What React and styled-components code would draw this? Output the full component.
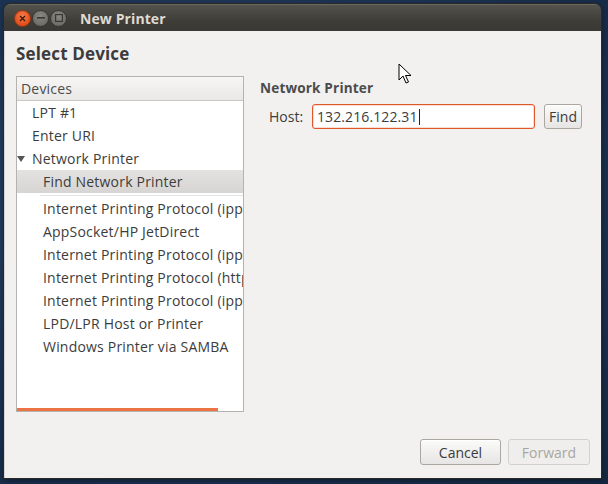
import React from "react";
import styled, { createGlobalStyle } from "styled-components";

const Global = createGlobalStyle`
  html, body { margin: 0; padding: 0; }
  body {
    width: 608px; height: 484px; overflow: hidden;
    background: radial-gradient(ellipse at 30% 40%, #2c4a72 0%, #1d3556 50%, #142843 100%);
    font-family: "Open Sans", "DejaVu Sans", sans-serif;
  }
`;

const Window = styled.div`
  position: relative;
  margin: 4px 7px 0 4px;
  width: 597px;
  height: 474px;
  display: flex;
  flex-direction: column;
  border-radius: 6px 6px 0 0;
  box-shadow: 0 0 0 1px #2a2925, 0 2px 6px rgba(0,0,0,0.5);
  overflow: hidden;
`;

const TitleBar = styled.div`
  height: 27px;
  flex: none;
  display: flex;
  align-items: center;
  padding-left: 10px;
  background: linear-gradient(#54524c, #3f3d38 60%, #3a3834);
  border-top: 1px solid #6a6760;
  box-sizing: border-box;
`;

const WinBtn = styled.div`
  width: 17px;
  height: 17px;
  border-radius: 50%;
  margin-right: 1px;
  display: flex;
  align-items: center;
  justify-content: center;
  box-sizing: border-box;
  background: ${p => p.$close
    ? "radial-gradient(circle at 50% 35%, #f77c4c, #e0501c 70%, #c8400f)"
    : "radial-gradient(circle at 50% 35%, #8a8883, #6f6d68 70%, #5e5c57)"};
  border: 1px solid ${p => p.$close ? "#9c3410" : "#3a3834"};
`;

const Title = styled.div`
  margin-left: 12px;
  color: #dfdbd2;
  font-weight: 700;
  font-size: 14px;
  letter-spacing: 0.1px;
`;

const Body = styled.div`
  flex: 1;
  background: #f2f1f0;
  display: flex;
  flex-direction: column;
  padding: 12px 11px 13px 11px;
  box-sizing: border-box;
  border-left: 1px solid #d6d4d0;
`;

const Heading = styled.div`
  font-size: 17px;
  font-weight: 700;
  color: #3c3c3c;
  line-height: 22px;
  height: 22px;
  letter-spacing: 0.15px;
`;

const Main = styled.div`
  flex: 1;
  display: flex;
  margin-top: 11px;
  gap: 16px;
`;

const ListBox = styled.div`
  position: relative;
  width: 228px;
  height: 336px;
  box-sizing: border-box;
  border: 1px solid #b5b3af;
  background: #ffffff;
  overflow: hidden;
  font-size: 14px;
  letter-spacing: 0.2px;
  color: #3c3c3c;
`;

const ListHeader = styled.div`
  height: 24px;
  box-sizing: border-box;
  display: flex;
  align-items: center;
  padding-left: 4px;
  background: linear-gradient(#f7f6f5, #e9e8e6);
  border-bottom: 1px solid #c9c7c3;
  color: #4c4c4c;
`;

const Row = styled.div`
  height: 23px;
  display: flex;
  align-items: center;
  white-space: nowrap;
  padding-left: ${p => p.$indent}px;
  background: ${p => p.$selected ? "linear-gradient(#e3e2e0, #d6d5d3)" : "transparent"};
`;

const Expander = styled.span`
  width: 0;
  height: 0;
  border-left: 4px solid transparent;
  border-right: 4px solid transparent;
  border-top: 6px solid #555;
  margin-right: 7px;
  margin-left: -15px;
`;

const Separator = styled.div`
  height: 4px;
  display: flex;
  align-items: center;
  padding-left: 23px;
  &::after {
    content: "";
    flex: 1;
    height: 1px;
    background: #e4e3e1;
  }
`;

const ScrollIndicator = styled.div`
  position: absolute;
  left: 0;
  bottom: 0;
  width: 201px;
  height: 3px;
  background: #ec7444;
`;

const Side = styled.div`
  flex: 1;
  display: flex;
  flex-direction: column;
`;

const SideTitle = styled.div`
  font-size: 13.6px;
  font-weight: 700;
  color: #4c4c4c;
  margin-top: 4px;
  line-height: 16px;
  letter-spacing: 0.15px;
`;

const HostRow = styled.div`
  display: flex;
  align-items: center;
  margin-top: 8px;
  padding-left: 9px;
`;

const Label = styled.span`
  font-size: 14px;
  color: #3c3c3c;
  width: 43px;
`;

const Input = styled.div`
  width: 223px;
  height: 25px;
  box-sizing: border-box;
  border: 1px solid #e0572a;
  border-radius: 3px;
  background: #fff;
  display: flex;
  align-items: center;
  padding-left: 4px;
  font-size: 14px;
  letter-spacing: 0.1px;
  color: #3c3c3c;
  box-shadow: inset 0 0 0 1px rgba(240,120,70,0.25);
`;

const Caret = styled.span`
  display: inline-block;
  width: 1px;
  height: 16px;
  background: #222;
  margin-left: 1px;
`;

const Button = styled.button`
  font-family: inherit;
  font-size: 14px;
  height: ${p => p.$h || 26}px;
  width: ${p => p.$w}px;
  padding: 0;
  box-sizing: border-box;
  border-radius: 3px;
  border: 1px solid ${p => p.disabled ? "#d3d1cd" : "#aaa7a1"};
  color: ${p => p.disabled ? "#a9a7a3" : "#3c3c3c"};
  background: ${p => p.disabled ? "#efeeec" : "linear-gradient(#fbfbfa, #e6e5e3)"};
  box-shadow: ${p => p.disabled ? "none" : "inset 0 1px 0 #fff"};
`;

const FindButton = styled(Button)`
  margin-left: 9px;
`;

const Footer = styled.div`
  display: flex;
  justify-content: flex-end;
  gap: 7px;
  flex: none;
`;

const Cursor = styled.svg`
  position: absolute;
  left: 394px;
  top: 59px;
`;

export default function App() {
  const items = [
    "Internet Printing Protocol (ipp)",
    "AppSocket/HP JetDirect",
    "Internet Printing Protocol (ipps)",
    "Internet Printing Protocol (https)",
    "Internet Printing Protocol (ipp14)",
    "LPD/LPR Host or Printer",
    "Windows Printer via SAMBA",
  ];
  return (
    <>
      <Global />
      <Window>
        <TitleBar>
          <WinBtn $close>
            <svg width="7" height="7" viewBox="0 0 7 7">
              <path d="M1 1L6 6M6 1L1 6" stroke="#3a1a0c" strokeWidth="1.3" />
            </svg>
          </WinBtn>
          <WinBtn>
            <svg width="8" height="2" viewBox="0 0 8 2">
              <rect width="8" height="1.6" fill="#3a3834" />
            </svg>
          </WinBtn>
          <WinBtn>
            <svg width="8" height="8" viewBox="0 0 8 8">
              <rect x="0.6" y="0.6" width="6.8" height="6.8" fill="none" stroke="#3a3834" strokeWidth="1.2" />
            </svg>
          </WinBtn>
          <Title>New Printer</Title>
        </TitleBar>
        <Body>
          <Heading>Select Device</Heading>
          <Main>
            <ListBox>
              <ListHeader>Devices</ListHeader>
              <Row $indent={15}>LPT #1</Row>
              <Row $indent={15}>Enter URI</Row>
              <Row $indent={15}><Expander />Network Printer</Row>
              <Row $indent={26} $selected>Find Network Printer</Row>
              <Separator />
              {items.map((t, i) => (
                <Row key={i} $indent={26}>{t}</Row>
              ))}
              <ScrollIndicator />
            </ListBox>
            <Side>
              <SideTitle>Network Printer</SideTitle>
              <HostRow>
                <Label>Host:</Label>
                <Input>132.216.122.31<Caret /></Input>
                <FindButton $w={38} $h={25}>Find</FindButton>
              </HostRow>
            </Side>
          </Main>
          <Footer>
            <Button $w={81}>Cancel</Button>
            <Button $w={82} disabled>Forward</Button>
          </Footer>
        </Body>
        <Cursor width="14" height="22" viewBox="0 0 14 22">
          <path d="M1 1 L1 17 L5 13 L8 20 L10.5 19 L7.5 12.5 L13 12.5 Z" fill="#fff" stroke="#000" strokeWidth="1" strokeLinejoin="round" />
        </Cursor>
      </Window>
    </>
  );
}
